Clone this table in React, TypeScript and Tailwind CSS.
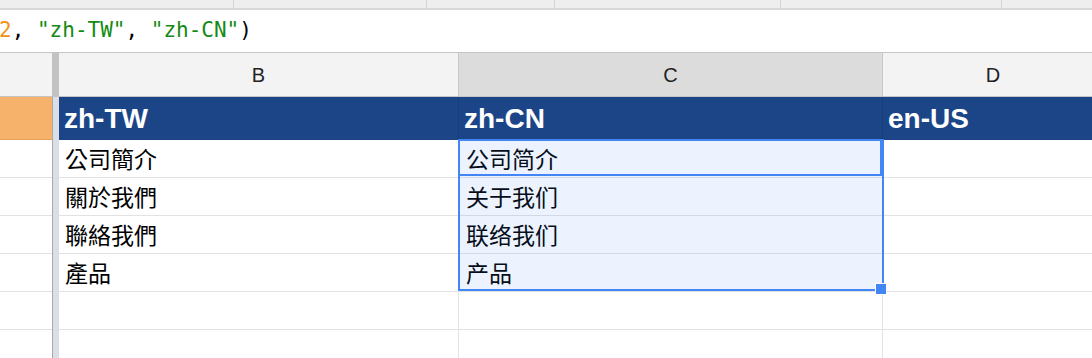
import React from 'react'

const sans = "font-['Liberation_Sans',Arial,sans-serif]"
const tc = "font-['Noto_Sans_CJK_TC','Noto_Sans_CJK_SC',sans-serif]"
const sc = "font-['Noto_Sans_CJK_SC','Noto_Sans_CJK_TC',sans-serif]"

const rows: { tw: string; cn: string }[] = [
  { tw: '公司簡介', cn: '公司简介' },
  { tw: '關於我們', cn: '关于我们' },
  { tw: '聯絡我們', cn: '联络我们' },
  { tw: '產品', cn: '产品' },
  { tw: '', cn: '' },
  { tw: '', cn: '' },
]

function ToolbarEdge() {
  return (
    <div className="flex h-[10px] border-b-2 border-[#d8d8d8] bg-[#eeeeee]">
      <div className="w-[234px] shrink-0 border-r border-[#d4d4d4]" />
      <div className="w-[193px] shrink-0 border-r border-[#d4d4d4]" />
      <div className="w-[128px] shrink-0 border-r border-[#d4d4d4]" />
      <div className="w-[226px] shrink-0 border-r border-[#d4d4d4]" />
      <div className="w-[221px] shrink-0 border-r border-[#d4d4d4]" />
      <div className="flex-1" />
    </div>
  )
}

function FormulaBar() {
  return (
    <div className="flex h-[43px] items-center border-b border-[#c6c6c6] bg-white pb-[1px]">
      <div className="-ml-[1px] whitespace-pre font-['DejaVu_Sans_Mono',monospace] text-[21px] text-black">
        <span className="text-[#f39019]">2</span>
        {', '}
        <span className="text-[#138a13]">"zh-TW"</span>
        {', '}
        <span className="text-[#138a13]">"zh-CN"</span>
        {')'}
      </div>
    </div>
  )
}

function ColumnHeaders() {
  return (
    <div className={`flex h-[44px] border-b border-[#c4c4c4] bg-[#f3f3f3] text-[20px] text-[#222] ${sans}`}>
      <div className="w-[52px] shrink-0" />
      <div className="w-[7px] shrink-0 bg-[#c2c2c2]" />
      <div className="flex w-[400px] shrink-0 items-center justify-center border-r border-[#c9c9c9]">B</div>
      <div className="flex w-[424px] shrink-0 items-center justify-center border-r border-[#c9c9c9] bg-[#dcdcdc]">C</div>
      <div className="flex w-[221px] shrink-0 items-center justify-center border-r border-[#c9c9c9]">D</div>
    </div>
  )
}

function TitleRow() {
  return (
    <div className={`flex h-[43px] text-[28px] font-bold text-white ${sans}`}>
      <div className="w-[52px] shrink-0 border-b border-[#e2a35f] bg-[#f6b26b]" />
      <div className="w-[7px] shrink-0 border-l border-[#a9a9a9] bg-[#d9dee7]" />
      <div className="flex w-[400px] shrink-0 items-center border-r border-[#183c76] bg-[#1c4587] pl-[5px]">zh-TW</div>
      <div className="flex w-[424px] shrink-0 items-center border-r border-[#183c76] bg-[#1c4587] pl-[5px]">zh-CN</div>
      <div className="flex w-[221px] shrink-0 items-center bg-[#1c4587] pl-[5px]">en-US</div>
    </div>
  )
}

function DataRow({ tw, cn }: { tw: string; cn: string }) {
  return (
    <div className="flex h-[38px] text-[23px] text-black">
      <div className="w-[52px] shrink-0 border-b border-[#e2e2e2]" />
      <div className="w-[7px] shrink-0 border-l border-[#a9a9a9] bg-[#d9dee7]" />
      <div className={`flex w-[400px] shrink-0 items-center border-b border-r border-[#e2e2e2] pl-[6px] ${tc}`}>{tw}</div>
      <div className={`flex w-[424px] shrink-0 items-center border-b border-r border-[#e2e2e2] pl-[7px] ${sc}`}>{cn}</div>
      <div className="w-[221px] shrink-0 border-b border-[#e2e2e2]" />
    </div>
  )
}

export default function App() {
  return (
    <div className="h-[358px] w-[1092px] overflow-hidden bg-white">
      <ToolbarEdge />
      <FormulaBar />
      <ColumnHeaders />
      <div className="relative">
        <TitleRow />
        {rows.map((r, i) => (
          <DataRow key={i} tw={r.tw} cn={r.cn} />
        ))}

        {/* selected range C2:C5 */}
        <div className="pointer-events-none absolute left-[458px] top-[42px] h-[152px] w-[426px] border-2 border-[#4285f4] bg-[#4285f4]/10" />
        {/* active cell C2 */}
        <div className="pointer-events-none absolute left-[458px] top-[42px] h-[37px] w-[424px] border-2 border-[#4285f4]" />
        {/* fill handle */}
        <div className="absolute left-[875px] top-[186px] h-[12px] w-[12px] border border-white bg-[#4285f4]" />
      </div>
    </div>
  )
}
